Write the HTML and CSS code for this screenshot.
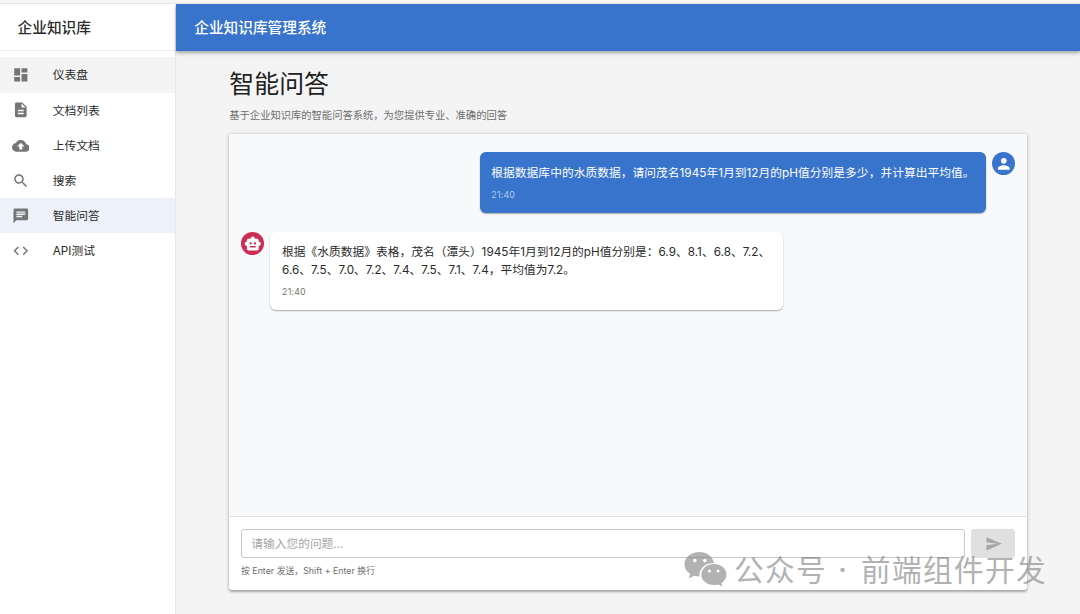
FILE: index.html
```html
<!DOCTYPE html>
<html lang="zh-CN">
<head>
<meta charset="utf-8">
<title>企业知识库管理系统</title>
<link rel="stylesheet" href="styles.css">
</head>
<body>
<div class="topline"></div>
<div class="app">
  <aside class="sidebar">
    <div class="brand">企业知识库</div>
    <nav class="nav">
      <a class="item hovered"><svg class="icon" viewBox="0 0 24 24"><path d="M3 13h8V3H3v10zm0 8h8v-6H3v6zm10 0h8V11h-8v10zm0-18v6h8V3h-8z"/></svg><span>仪表盘</span></a>
      <a class="item"><svg class="icon" viewBox="0 0 24 24"><path d="M14 2H6c-1.1 0-2 .9-2 2v16c0 1.1.89 2 2 2h12c1.1 0 2-.9 2-2V8l-6-6zm2 16H8v-2h8v2zm0-4H8v-2h8v2zm-3-5V3.500L18.500 9H13z"/></svg><span>文档列表</span></a>
      <a class="item"><svg class="icon" viewBox="0 0 24 24"><path d="M19.350 10.040C18.670 6.590 15.640 4 12 4 9.110 4 6.600 5.640 5.350 8.040 2.340 8.360 0 10.910 0 14c0 3.310 2.690 6 6 6h13c2.760 0 5-2.240 5-5 0-2.640-2.050-4.780-4.650-4.960zM14 13v4h-4v-4H7l5-5 5 5h-3z"/></svg><span>上传文档</span></a>
      <a class="item"><svg class="icon" viewBox="0 0 24 24"><path d="M15.500 14h-.79l-.28-.27C15.410 12.590 16 11.110 16 9.500 16 5.910 13.090 3 9.500 3S3 5.910 3 9.500 5.910 16 9.500 16c1.610 0 3.090-.59 4.230-1.570l.27.28v.79l5 4.990L20.490 19l-4.990-5zm-6 0C7.010 14 5 11.990 5 9.500S7.010 5 9.500 5 14 7.010 14 9.500 11.990 14 9.500 14z"/></svg><span>搜索</span></a>
      <a class="item selected"><svg class="icon" viewBox="0 0 24 24"><path d="M20 2H4c-1.100 0-1.990.9-1.990 2L2 22l4-4h14c1.100 0 2-.9 2-2V4c0-1.100-.9-2-2-2zM6 9h12v2H6V9zm8 5H6v-2h8v2zm4-6H6V6h12v2z"/></svg><span>智能问答</span></a>
      <a class="item"><svg class="icon" viewBox="0 0 24 24"><path d="M9.400 16.600 4.800 12l4.600-4.600L8 6l-6 6 6 6 1.400-1.400zm5.200 0 4.600-4.600-4.600-4.600L16 6l6 6-6 6-1.400-1.400z"/></svg><span>API测试</span></a>
    </nav>
  </aside>
  <div class="content">
    <header class="appbar">企业知识库管理系统</header>
    <main class="page">
      <h1 class="title">智能问答</h1>
      <p class="subtitle">基于企业知识库的智能问答系统，为您提供专业、准确的回答</p>
      <section class="card">
        <div class="messages">
          <div class="message user">
            <div class="bubble">
              <div class="text">根据数据库中的水质数据，请问茂名1945年1月到12月的pH值分别是多少，并计算出平均值。</div>
              <div class="time">21:40</div>
            </div>
            <div class="avatar"><svg class="icon" viewBox="0 0 24 24"><path d="M12 12c2.210 0 4-1.790 4-4s-1.790-4-4-4-4 1.790-4 4 1.790 4 4 4zm0 2c-2.670 0-8 1.340-8 4v2h16v-2c0-2.660-5.330-4-8-4z"/></svg></div>
          </div>
          <div class="message bot">
            <div class="avatar"><svg class="icon" viewBox="0 0 24 24"><path d="M20 9V7c0-1.100-.9-2-2-2h-3c0-1.660-1.340-3-3-3S9 3.340 9 5H6c-1.100 0-2 .9-2 2v2c-1.660 0-3 1.340-3 3s1.340 3 3 3v4c0 1.100.9 2 2 2h12c1.100 0 2-.9 2-2v-4c1.660 0 3-1.340 3-3s-1.340-3-3-3zM7.500 11.500c0-.83.67-1.500 1.500-1.500s1.500.67 1.500 1.500S9.830 13 9 13s-1.500-.67-1.500-1.500zM16 17H8v-2h8v2zm-1-4c-.83 0-1.500-.67-1.500-1.500S14.170 10 15 10s1.500.67 1.500 1.500S15.830 13 15 13z"/></svg></div>
            <div class="bubble">
              <div class="text">根据《水质数据》表格，茂名（潭头）1945年1月到12月的pH值分别是：6.9、8.1、6.8、7.2、<br>6.6、7.5、7.0、7.2、7.4、7.5、7.1、7.4，平均值为7.2。</div>
              <div class="time">21:40</div>
            </div>
          </div>
        </div>
        <div class="composer">
          <div class="row">
            <div class="input">请输入您的问题...</div>
            <div class="send"><svg class="icon" viewBox="0 0 24 24"><path d="M2.010 21 23 12 2.010 3 2 10l15 2-15 2z"/></svg></div>
          </div>
          <div class="hint">按 Enter 发送，Shift + Enter 换行</div>
        </div>
      </section>
    </main>
  </div>
</div>
<div class="watermark">
  <svg class="wechat" viewBox="0 0 44 36">
    <path fill-rule="evenodd" d="M16.500 1C8.200 1 1.500 6.400 1.500 13.200c0 3.900 2.100 7.300 5.600 9.500L5.800 27.500l5.400-2.700c1.600.5 3.400.7 5.300.7C15.800 18 22 11.800 31 12.100 29.700 5.600 24 1 16.500 1zM11.800 7.800a1.800 1.800 0 1 1 0 3.600 1.800 1.800 0 0 1 0-3.600zm10 0a1.800 1.800 0 1 1 0 3.600 1.800 1.800 0 0 1 0-3.600z"/>
    <path fill-rule="evenodd" d="M31 13C24 13 18.300 17.700 18.300 23.600S24 34.100 31 34.100c1.600 0 3.100-.3 4.500-.7l4 2.100-1-3.600c3-1.900 5-4.900 5-8.300C43.500 17.700 38 13 31 13zM26.400 18.500a1.500 1.500 0 1 1 0 3 1.500 1.500 0 0 1 0-3zm8.700 0a1.500 1.500 0 1 1 0 3 1.500 1.500 0 0 1 0-3z"/>
  </svg>
  <span class="label">公众号</span><span class="dot">·</span><span class="name">前端组件开发</span>
</div>
</body>
</html>
```
FILE: styles.css
```css
* { box-sizing: border-box; }
body {
  margin: 0;
  width: 1080px;
  height: 614px;
  overflow: hidden;
  position: relative;
  background: #f4f4f4;
  color: #2b2b2b;
  font-family: Inter, "Noto Sans CJK SC", sans-serif;
  font-size: 11.73px;
  display: flex;
  flex-direction: column;
}
.topline { height: 3.5px; flex: none; background: #f8f5f6; border-bottom: 1px solid #e6e3e4; }
.app { display: flex; flex: 1; min-height: 0; }
.sidebar { width: 176px; flex: none; background: #fff; border-right: 1px solid #e8e8e8; }
.brand {
  height: 47.5px;
  padding-left: 17.6px;
  line-height: 48px;
  font-size: 14.67px;
  font-weight: 500;
  border-bottom: 1px solid #ececec;
}
.nav { padding-top: 6.4px; }
.item { display: flex; align-items: center; gap: 23.5px; height: 35.2px; padding-left: 11.7px; line-height: 17.6px; }
.item span { padding-top: 2.4px; }
.hovered { background: #f4f4f4; }
.selected { background: #edf2fa; }
.icon { width: 17.6px; height: 17.6px; fill: #757575; display: block; flex: none; }
.content { flex: 1; display: flex; flex-direction: column; }
.appbar {
  height: 47px;
  flex: none;
  padding-left: 18.3px;
  line-height: 48px;
  background: #3874cb;
  color: #fff;
  font-size: 14.67px;
  font-weight: 500;
  box-shadow: 0 1.5px 3px rgba(0,0,0,.26), 0 3px 4px rgba(0,0,0,.1);
}
.page { flex: 1; padding: 18px 53px 23.6px 53.3px; display: flex; flex-direction: column; }
.title { margin: 0; color: #212121; font-size: 24.93px; font-weight: 400; line-height: 31px; }
.subtitle { margin: 8px 0 11px; font-size: 10.27px; line-height: 15px; letter-spacing: .02px; color: #6e6e6e; }
.card {
  flex: 1;
  display: flex;
  flex-direction: column;
  overflow: hidden;
  border-radius: 3px;
  background: #fff;
  box-shadow: 0 1.5px 2.5px rgba(0,0,0,.28), 0 0 4px rgba(0,0,0,.14);
}
.messages { flex: 1; padding: 18.3px 11.7px; background: #f8f9fb; display: flex; flex-direction: column; gap: 18.5px; }
.message { display: flex; align-items: flex-start; gap: 5.9px; }
.user { justify-content: flex-end; }
.bubble { padding: 12.7px 11.7px 11px; border-radius: 5.9px; box-shadow: 0 1px 1.5px rgba(0,0,0,.32); }
.user .bubble { width: 506.3px; height: 61.5px; padding-top: 13.5px; background: #3874cb; color: #fff; }
.bot .bubble { width: 513px; height: 78px; background: #fff; }
.text { line-height: 17.6px; letter-spacing: .045px; white-space: nowrap; }
.bot .text { letter-spacing: .02px; }
.time { margin-top: 5.4px; font-size: 8.8px; line-height: 14.6px; letter-spacing: .2px; color: #757575; }
.user .time { color: #b2cbec; }
.avatar { width: 23.5px; height: 23.5px; border-radius: 50%; display: flex; align-items: center; justify-content: center; background: #3874cb; }
.avatar .icon { width: 17.6px; height: 17.6px; fill: #fff; }
.bot .avatar { background: #cb2d55; }
.composer { height: 74.8px; padding: 12.2px 11.7px 11px; border-top: 1px solid #e0e0e0; }
.row { display: flex; gap: 5.9px; height: 29.5px; }
.input { flex: 1; border: 1px solid #c8c8c8; border-radius: 3px; padding-left: 9.3px; line-height: 29.5px; color: #a6a6a6; }
.send { width: 44px; border-radius: 3px; background: #e0e0e0; display: flex; align-items: center; justify-content: center; }
.send .icon { fill: #a6a6a6; }
.hint { margin-top: 6px; font-size: 8.8px; line-height: 14.6px; letter-spacing: .03px; color: #6e6e6e; white-space: nowrap; }
.watermark {
  position: absolute;
  left: 683px;
  top: 547px;
  display: flex;
  align-items: center;
  opacity: .6;
  color: #808080;
  font-family: "Noto Sans CJK SC", sans-serif;
  font-size: 29.7px;
  line-height: 44px;
  white-space: nowrap;
}
.wechat { width: 44px; height: 36px; fill: #808080; margin: 0 7px 0 0; }
.label, .name { letter-spacing: 1.3px; }
.dot { width: 34px; text-align: center; padding-right: 3px; font-family: Inter, sans-serif; font-weight: 500; }
```
